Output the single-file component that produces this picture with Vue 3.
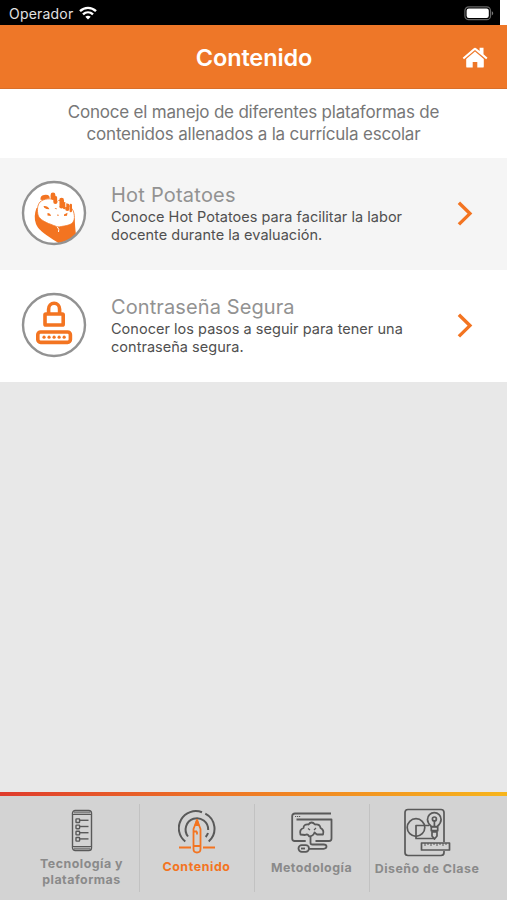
<script setup>
const items = [
  {
    icon: 'potato',
    title: 'Hot Potatoes',
    titleClass: 'title-hot',
    lines: ['Conoce Hot Potatoes para facilitar la labor', 'docente durante la evaluación.'],
  },
  {
    icon: 'lock',
    title: 'Contraseña Segura',
    titleClass: 'title-pass',
    lines: ['Conocer los pasos a seguir para tener una', 'contraseña segura.'],
  },
]
</script>

<template>
  <div class="screen">
    <div class="status">
      <div class="status-bar">
        <span class="carrier">Operador</span>
        <svg class="wifi" width="18" height="14" viewBox="0 0 18 14" fill="none" stroke="#fff" stroke-width="2.4">
          <path d="M1 5.2C5.6.8 12.4.8 17 5.2" />
          <path d="M4 8.4c2.9-2.7 7.1-2.7 10 0" />
          <path d="M6.3 10.8c1.6-1.4 3.8-1.4 5.4 0L9 13.6z" fill="#fff" stroke="none" />
        </svg>
        <svg class="battery" width="30" height="15" viewBox="0 0 30 15">
          <rect x=".9" y=".9" width="25.6" height="12.8" rx="3.8" fill="none" stroke="#666" stroke-width="1.2" />
          <rect x="2.6" y="2.6" width="22.2" height="9.4" rx="2.2" fill="#fff" />
          <path d="M27.8 5.2c1.9.7 1.9 3.5 0 4.2z" fill="#777" />
        </svg>
      </div>
    </div>

    <header class="header">
      <h1>Contenido</h1>
      <svg class="home" width="26" height="22" viewBox="0 0 26 22" fill="#fff">
        <path d="M.7 10.8 11.5 1.4q1.5-1.2 3 0L17.6 4V.8h3.900v6.400l4 3.600-1.300 1.500L13 3.100 2 12.300z" />
        <path d="M13 4.500 21.800 12v7.400q0 1.200-1.200 1.200h-5.300v-5.500h-4.600v5.500H5.400q-1.200 0-1.200-1.200V12z" />
      </svg>
    </header>

    <p class="intro">
      <span>Conoce el manejo de diferentes plataformas de</span>
      <span>contenidos allenados a la currícula escolar</span>
    </p>

    <main>
      <article v-for="item in items" :key="item.title" class="item">
        <svg v-if="item.icon === 'potato'" class="badge" width="66" height="66" viewBox="0 0 66 66">
          <circle cx="33" cy="33" r="31" fill="#fff" />
          <path d="M15.500 28C13.500 33 13 39 15 44c2 5 6.500 8 11 11.500 4 3 8 5 11.500 7.500Q47 61.500 55 54.500c-.8-6-1-10-1.300-16z" fill="#f37421" />
          <path d="M19 22C23 18.500 29 18 35 20c8 1 14.500 5.500 17.300 11 2 6 1.500 11.500-3.300 13.500-4.500 1.800-7.500 1.500-11 2.500-4-.5-7-2.500-10.500-3.500C22 41 18 38.500 17 35c-1-5-.8-9.500 2-13z" fill="#fff" stroke="#f37421" stroke-width=".8" />
          <path d="M19.500 19.800q-.5-4.300 3.500-4.800 4-.6 5.300 1.200l.5 2.300q-4-.3-6.800 1.500z" fill="#f37421" />
          <g fill="none" stroke="#f37421" stroke-linecap="round">
            <path d="M32 15v2.500M40.600 20.200v6" stroke-width="4.800" />
            <path d="M34.400 18v4M46.300 25.500v3.500" stroke-width="4.200" />
            <path d="M43.200 23.500v4.500M49.800 25v6" stroke-width="2.400" />
          </g>
          <path d="M36.700 15v6M37.900 21v5M44.800 23v4" stroke="#fff" stroke-width=".9" />
          <path d="M22.500 26q4-.6 6 3.200l-3-.2q-3-1-3-3zM26.500 33q3 0 3.500 3l-3.500-.400zM43 34.500l3.500-1.800-.5 3-3 .3zM33.500 28h2v1.600zM36 35.500l1-1.500.8 2z" fill="#f37421" />
          <path d="M36 46.500q2.800 3 1.500 5.500" fill="none" stroke="#fff" stroke-width="1" />
          <circle cx="33" cy="33" r="31" fill="none" stroke="#929292" stroke-width="2.400" />
        </svg>

        <svg v-else class="badge" width="66" height="66" viewBox="0 0 66 66">
          <circle cx="33" cy="33" r="31" fill="#fff" stroke="#929292" stroke-width="2.400" />
          <g fill="none" stroke="#f37421" stroke-width="3.600" stroke-linejoin="round">
            <path d="M27.600 21v-3.700a5.500 6 0 0 1 11 0V21" />
            <rect x="24" y="22" width="18.200" height="11" rx=".8" />
            <rect x="16.800" y="40" width="32.600" height="10.400" rx="2.800" />
          </g>
          <g fill="#f37421">
            <circle v-for="n in 5" :key="n" :cx="18 + n * 5.030" cy="45.200" r="1.600" />
          </g>
        </svg>

        <div class="copy">
          <h2 :class="item.titleClass">{{ item.title }}</h2>
          <p><span v-for="line in item.lines" :key="line">{{ line }}</span></p>
        </div>
        <svg class="chevron" width="18" height="26" viewBox="0 0 18 26" fill="none" stroke="#f37421" stroke-width="3.400">
          <path d="m2.900 2.800 11 10.800-11 10.800" />
        </svg>
      </article>
    </main>

    <nav class="tabs">
      <div class="tab tab-tech">
        <svg width="22" height="44" viewBox="0 0 22 44" fill="none" stroke="#595959" stroke-width="1.400">
          <rect x="1.500" y="1.500" width="19" height="40" rx="2.800" />
          <path d="M2 5.500h18M2 37.500h18" stroke-width="1" />
          <path d="M3 3.500h16M3 39.500h16" stroke-width="2" opacity=".65" />
          <g v-for="n in 4" :key="n" :transform="`translate(0 ${n * 6.200 + 5.500})`">
            <rect x="5" y="-1.800" width="3.600" height="3.600" rx=".6" />
            <path d="M8.500-.4h9" />
          </g>
        </svg>
        <span>Tecnología y</span>
        <span class="second">plataformas</span>
      </div>
      <div class="tab tab-content">
        <svg width="38" height="46" viewBox="0 0 38 46" fill="none" stroke="#595959" stroke-width="2">
          <path d="M7.300 32.500A17 17 0 0 1 24 3.300M27.300 4.600a17 17 0 0 1 3.400 27.900" />
          <path d="M10 27.500A11.300 11.300 0 1 1 30.200 21M30 24q-.6 2-2.300 4" />
          <g stroke="#f37421" stroke-width="1.800" stroke-linejoin="round">
            <path d="m19 11-3.500 9v20q0 3.500 3.500 3.500t3.500-3.500V20zM15.500 22.500h3.500M15.500 37h7M19 22.500v3M1 38.500h12M25 38.500h12" />
            <path d="m19 11-1.500 5h3z" fill="#f37421" />
          </g>
        </svg>
        <span>Contenido</span>
      </div>
      <div class="tab tab-method">
        <svg width="42" height="42" viewBox="0 0 42 42" fill="none" stroke="#595959" stroke-width="1.800" stroke-linejoin="round">
          <path d="M40 1.500H4Q1.200 1.500 1.200 4v22.500q0 2.500 2.500 2.500h11M24.500 29H38q2.500 0 2.500-2.500V7.500h-35" />
          <path d="M4 4.500h5.500" stroke-width="1" stroke-dasharray="1.200 .8" />
          <path d="M9.500 22.500q-1.500-5 3-6.500 0-4 5-3.500 3-4 6.500 0 5-.5 5.500 3.500 4 2 2.500 6.500H26q-1.500-1-2.500-2-1.500 4-5.500 3.800-1-2.800-4-1.300z" />
          <path d="M19.500 24v7q0 1.500 2 1.500h11q3 0 3 2t-3 2.300H17" />
          <path d="m17 16.500 2 1.500M25 16l-2 2" stroke-width="1.200" />
          <rect x="7.500" y="33.200" width="10.500" height="6.600" rx="3.300" />
          <path d="M10 36.500h4" />
        </svg>
        <span>Metodología</span>
      </div>
      <div class="tab tab-design">
        <svg width="48" height="50" viewBox="0 0 48 50" fill="none" stroke="#595959" stroke-width="1.700" stroke-linejoin="round">
          <path d="M41 34V4.500Q41 1.500 38 1.500H5Q2 1.500 2 4.500v40q0 3 3 3h33q3 0 3-3V43" />
          <circle cx="13" cy="19.500" r="8.800" />
          <path d="M26 17.500H13v13h19" />
          <path d="M28.300 18.500Q24.500 15 24.500 11.500a6.800 6.800 0 0 1 13.600 0q0 3.500-3.800 7z" />
          <path d="M28.300 19h6.400v3.700h-6.400zM29 24h5v4l-2.500 3-2.500-3zM31.400 12v7" />
          <circle cx="31.400" cy="11" r="2" />
          <rect x="18.500" y="35" width="28" height="7" fill="#d3d3d3" />
          <path d="M22 35v3M25 35v2M28 35v3M31 35v2M34 35v3M37 35v2M40 35v3M43 35v2" stroke-width="1" />
        </svg>
        <span>Diseño de Clase</span>
      </div>
    </nav>
  </div>
</template>

<style>
body {
  margin: 0;
}
</style>

<style scoped>
.screen {
  display: flex;
  flex-direction: column;
  width: 507px;
  height: 900px;
  overflow: hidden;
  background: #e8e8e8;
  font-family: Inter, "Liberation Sans", sans-serif;
}
.screen svg {
  display: block;
  flex: none;
}
h1, h2, p {
  margin: 0;
}
.status {
  height: 25px;
  flex: none;
  background: #fff;
}
.status-bar {
  display: flex;
  width: 500px;
  height: 25px;
  box-sizing: border-box;
  padding: 6px 6px 0 9px;
  background: #000;
}
.carrier {
  width: 70px;
  color: #e2e2e2;
  font-size: 14px;
  line-height: 16px;
  letter-spacing: 0.2px;
}
.battery {
  margin-left: auto;
}
.header {
  display: grid;
  grid-template-columns: 1fr auto 1fr;
  height: 64px;
  flex: none;
  box-sizing: border-box;
  padding: 2px 19px 0 20px;
  align-items: center;
  background: #ee7728;
  border-bottom: 1px solid #d96f2a;
}
.header h1 {
  grid-column: 2;
  color: #fff;
  font-size: 23.5px;
  font-weight: 600;
  line-height: 30px;
  letter-spacing: -0.1px;
}
.home {
  justify-self: end;
}
.intro {
  height: 69px;
  flex: none;
  box-sizing: border-box;
  padding-top: 12px;
  background: #fff;
  color: #777;
  font-size: 17px;
  line-height: 22px;
  letter-spacing: -0.2px;
  text-align: center;
}
.intro span {
  display: block;
  white-space: nowrap;
}
.item {
  display: flex;
  height: 112px;
  box-sizing: border-box;
  padding: 22px 33px 0 21px;
  background: #fff;
}
.item:first-child {
  background: #f5f5f5;
}
.copy {
  margin-left: 24px;
  padding-top: 3px;
  flex: 1;
  white-space: nowrap;
}
.copy h2 {
  color: #929292;
  font-size: 20px;
  font-weight: 400;
  line-height: 25px;
}
.copy .title-hot {
  letter-spacing: 0.22px;
}
.copy .title-pass {
  letter-spacing: 0.1px;
}
.copy p {
  color: #505050;
  font-size: 14.5px;
  line-height: 18.3px;
  letter-spacing: 0.03px;
}
.copy span {
  display: block;
}
.chevron {
  margin-top: 20px;
}
.tabs {
  display: grid;
  grid-template-columns: repeat(4, 115px);
  justify-content: center;
  height: 108px;
  flex: none;
  margin-top: auto;
  box-sizing: border-box;
  padding: 12px 0 8px 2px;
  background: linear-gradient(90deg, #df3b2c, #ee7725 45%, #f7b51c) top / 100% 4px no-repeat, #d3d3d3;
}
.tab {
  display: flex;
  flex-direction: column;
  align-items: center;
  border-right: 1px solid #c2c2c2;
  color: #8a8a8a;
  font-size: 12.4px;
  font-weight: 700;
  line-height: 16px;
  letter-spacing: 0.5px;
  white-space: nowrap;
}
.tab:last-child {
  border-right: 0;
}
.tab-tech {
  padding-top: 5px;
}
.tab-tech span {
  margin-top: 3px;
}
.tab-tech .second {
  margin-top: 0;
}
.tab-content {
  padding-top: 5px;
}
.tab-content span {
  margin-top: 4px;
  color: #f37421;
  letter-spacing: 0.6px;
}
.tab-method {
  padding-top: 8px;
}
.tab-method span {
  margin-top: 6px;
}
.tab-design {
  padding-top: 4px;
}
.tab-design span {
  margin-top: 3px;
}
</style>
